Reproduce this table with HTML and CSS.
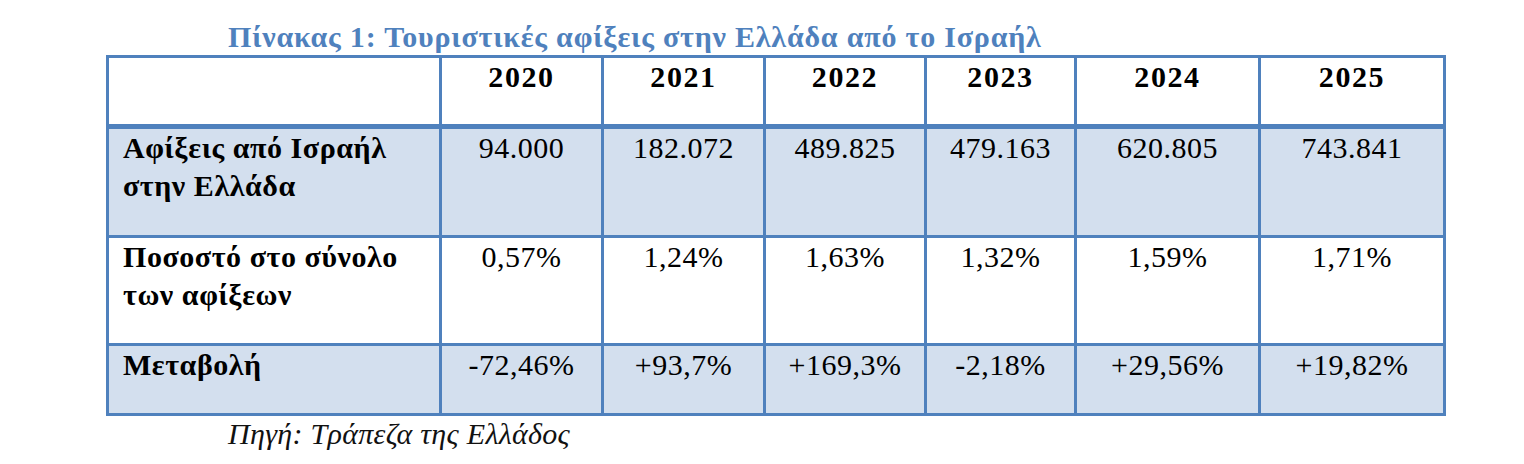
FILE: index.html
```html
<!DOCTYPE html>
<html lang="el">
<head>
<meta charset="utf-8">
<title>Πίνακας 1</title>
<link rel="stylesheet" href="styles.css">
</head>
<body>
<div class="page">
  <div class="caption">Πίνακας 1: Τουριστικές αφίξεις στην Ελλάδα από το Ισραήλ</div>
  <div class="grid">
    <div class="cell head"></div>
    <div class="cell head num">2020</div>
    <div class="cell head num">2021</div>
    <div class="cell head num">2022</div>
    <div class="cell head num">2023</div>
    <div class="cell head num">2024</div>
    <div class="cell head num">2025</div>

    <div class="cell first band label">Αφίξεις από Ισραήλ<br>στην Ελλάδα</div>
    <div class="cell first band num">94.000</div>
    <div class="cell first band num">182.072</div>
    <div class="cell first band num">489.825</div>
    <div class="cell first band num">479.163</div>
    <div class="cell first band num">620.805</div>
    <div class="cell first band num">743.841</div>

    <div class="cell label">Ποσοστό στο σύνολο<br>των αφίξεων</div>
    <div class="cell num">0,57%</div>
    <div class="cell num">1,24%</div>
    <div class="cell num">1,63%</div>
    <div class="cell num">1,32%</div>
    <div class="cell num">1,59%</div>
    <div class="cell num">1,71%</div>

    <div class="cell band label">Μεταβολή</div>
    <div class="cell band num">-72,46%</div>
    <div class="cell band num">+93,7%</div>
    <div class="cell band num">+169,3%</div>
    <div class="cell band num">-2,18%</div>
    <div class="cell band num">+29,56%</div>
    <div class="cell band num">+19,82%</div>
  </div>
  <div class="source">Πηγή: Τράπεζα της Ελλάδος</div>
</div>
</body>
</html>
```
FILE: styles.css
```css
html, body {
  margin: 0;
  padding: 0;
  background: #ffffff;
}

.page {
  padding: 19px 0 0 106px;
  font-family: "Liberation Serif", "DejaVu Serif", serif;
  font-size: 30px;
  color: #000000;
}

.caption {
  padding-left: 122px;
  line-height: 36px;
  font-weight: bold;
  color: #4f81bd;
  letter-spacing: 0.8px;
  white-space: nowrap;
}

.grid {
  display: grid;
  width: max-content;
  grid-template-columns: 333px 162px 162px 161px 150px 184px 185px;
  grid-template-rows: 69px 111px 108px 70px;
  border-right: 3px solid #4f81bd;
  border-bottom: 3px solid #4f81bd;
}

.cell {
  box-sizing: border-box;
  border-left: 3px solid #4f81bd;
  border-top: 3px solid #4f81bd;
  line-height: 38px;
  padding: 0 8px;
  background: #ffffff;
}

.cell.first {
  border-top-width: 5px;
}

.cell.band {
  background: #d3dfee;
}

.num {
  text-align: center;
  white-space: nowrap;
  letter-spacing: 0.5px;
}

.head {
  font-weight: bold;
  letter-spacing: 1.6px;
}

.label {
  font-weight: bold;
  padding-left: 14px;
  letter-spacing: 0.55px;
}

.source {
  padding-left: 122px;
  line-height: 36px;
  font-style: italic;
  letter-spacing: 0.3px;
  color: #111111;
}
```
